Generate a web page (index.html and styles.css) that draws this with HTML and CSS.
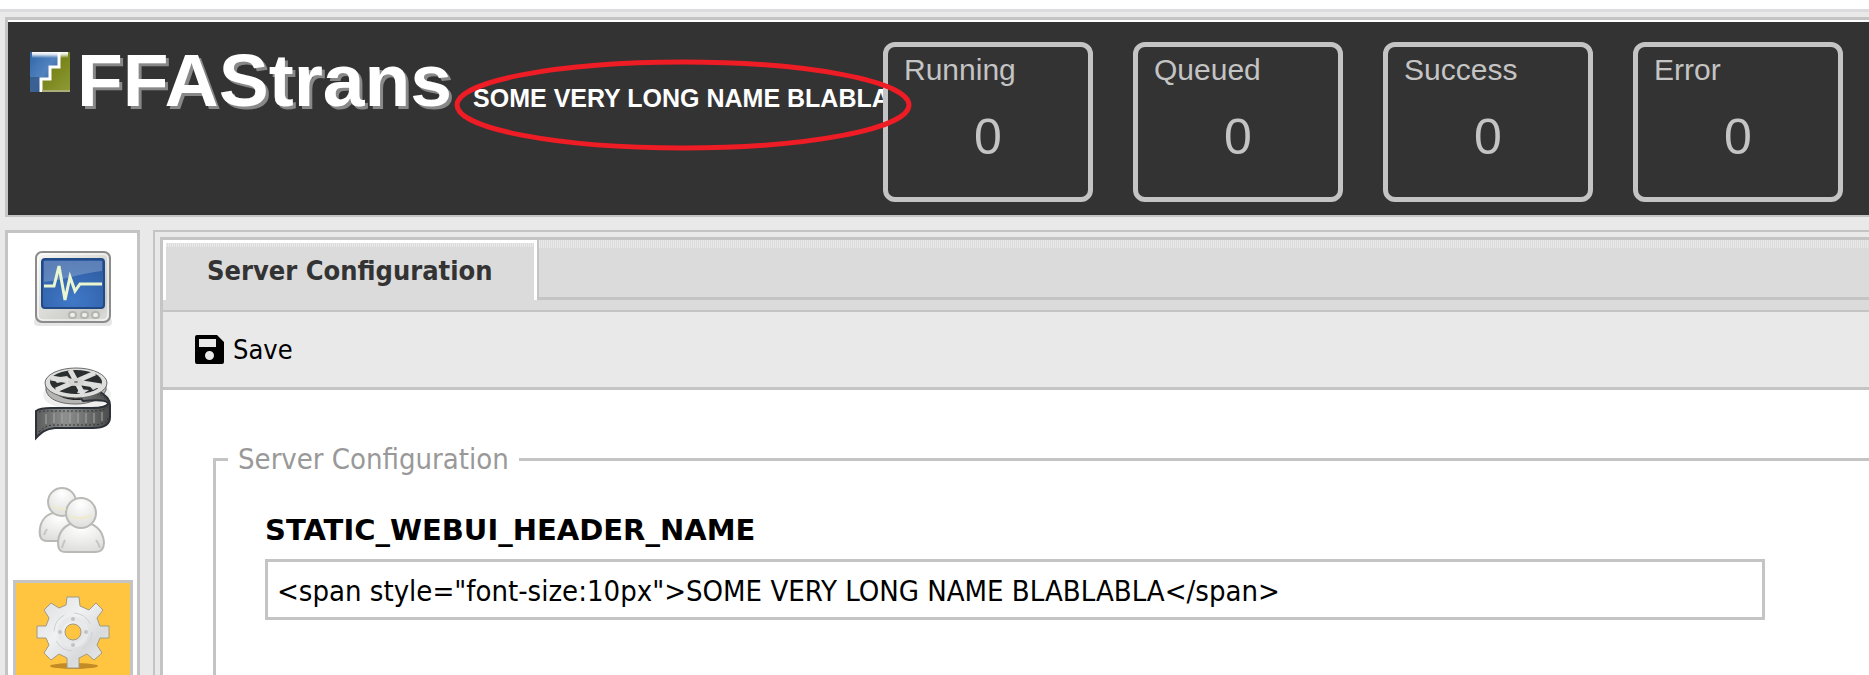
FILE: index.html
```html
<!DOCTYPE html>
<html lang="en">
<head>
    <meta charset="UTF-8">
    <meta name="viewport" content="width=device-width, initial-scale=1.0">
    <title>FFAStrans - Server Configuration</title>
    <link rel="stylesheet" href="styles.css">
</head>
<body>
    <!-- Header -->
    <header class="header">
        <svg class="logo" viewBox="0 0 40 40" aria-hidden="true">
            <defs>
                <linearGradient id="logoBlue" x1="0" y1="0" x2="1" y2="1">
                    <stop offset="0" stop-color="#2f66a8"/>
                    <stop offset="0.5" stop-color="#5283bf"/>
                    <stop offset="1" stop-color="#2d4d78"/>
                </linearGradient>
                <linearGradient id="logoGreen" x1="0" y1="0" x2="1" y2="1">
                    <stop offset="0" stop-color="#a5ad50"/>
                    <stop offset="0.5" stop-color="#78851a"/>
                    <stop offset="1" stop-color="#8f9a35"/>
                </linearGradient>
                <linearGradient id="logoShine" x1="0" y1="0" x2="0" y2="1">
                    <stop offset="0" stop-color="#ffffff"/>
                    <stop offset="0.4" stop-color="#ffffff" stop-opacity="0.8"/>
                    <stop offset="1" stop-color="#ffffff" stop-opacity="0"/>
                </linearGradient>
            </defs>
            <rect width="40" height="40" fill="url(#logoGreen)"/>
            <path d="M0 0H29V15H20V27H11V40H0z" fill="url(#logoBlue)"/>
            <path d="M0 25H11V40H0z" fill="#2d4d78" opacity="0.6"/>
            <path d="M2 0H38V6H2z" fill="url(#logoShine)"/>
            <path d="M29 0V15H20V27H11V40" fill="none" stroke="#fff" stroke-width="3"/>
            <path d="M12 39H40" stroke="#a9ae78" stroke-width="2"/>
        </svg>
        <h1 class="brand">FFAStrans</h1>
        <div class="host-name">SOME VERY LONG NAME BLABLABLA</div>
        <div class="stats">
            <section class="stat">
                <h2>Running</h2>
                <p>0</p>
            </section>
            <section class="stat">
                <h2>Queued</h2>
                <p>0</p>
            </section>
            <section class="stat">
                <h2>Success</h2>
                <p>0</p>
            </section>
            <section class="stat">
                <h2>Error</h2>
                <p>0</p>
            </section>
        </div>
        <svg class="marker" viewBox="0 0 458 92" aria-hidden="true">
            <ellipse cx="229" cy="46" rx="226" ry="43" fill="none" stroke="#ee1c24" stroke-width="5"/>
        </svg>
    </header>

    <div class="layout">
        <!-- Sidebar -->
        <nav class="sidebar">
            <a class="nav-item" href="#monitor" aria-label="Monitor">
                <svg viewBox="0 0 80 80">
                    <defs>
                        <linearGradient id="caseGrad" x1="0" y1="0" x2="1" y2="1">
                            <stop offset="0" stop-color="#f6f6f4"/>
                            <stop offset="0.8" stop-color="#c9c9c6"/>
                            <stop offset="1" stop-color="#e4e4e2"/>
                        </linearGradient>
                        <radialGradient id="screenGrad" cx="0.5" cy="0.85" r="0.8">
                            <stop offset="0" stop-color="#4079c8"/>
                            <stop offset="1" stop-color="#2f5da3"/>
                        </radialGradient>
                    </defs>
                    <rect x="1" y="70" width="78" height="8" rx="4" fill="#e6e6e6"/>
                    <rect x="3" y="4" width="74" height="70" rx="6" fill="url(#caseGrad)" stroke="#8c8c8c" stroke-width="2"/>
                    <rect x="5" y="6" width="70" height="66" rx="5" fill="none" stroke="#fff"/>
                    <rect x="9" y="11" width="62" height="49" rx="3" fill="url(#screenGrad)" stroke="#214a87" stroke-width="2"/>
                    <path d="M11 13H69V23C50 25 30 32 11 34z" fill="#fff" opacity="0.22"/>
                    <path d="M11 38H21L26 18L32 52L37 29L42 43L47 36H69" fill="none" stroke="#e9f6cf" stroke-width="3"/>
                    <g fill="#efefed" stroke="#b4b4b1" stroke-width="2">
                        <rect x="36" y="64" width="7" height="6" rx="3"/>
                        <rect x="48" y="64" width="7" height="6" rx="3"/>
                        <rect x="59" y="64" width="7" height="6" rx="3"/>
                    </g>
                </svg>
            </a>
            <a class="nav-item" href="#jobs" aria-label="Jobs">
                <svg viewBox="0 0 80 80">
                    <defs>
                        <linearGradient id="filmGrad" x1="0" y1="0" x2="1" y2="0">
                            <stop offset="0" stop-color="#5a5c5c"/>
                            <stop offset="0.4" stop-color="#8d8f8e"/>
                            <stop offset="1" stop-color="#4a4c4c"/>
                        </linearGradient>
                    </defs>
                    <ellipse cx="44" cy="32" rx="34" ry="15" fill="#eeeeee"/>
                    <path d="M13 20V27C15 37 28 41 43 41C56 41 70 36 73 27V19z" fill="#b5b5b3" stroke="#666666"/>
                    <path d="M22 30C30 37 44 39 56 35L50 30z" fill="#222222"/>
                    <path d="M45 32L65 28C73 32 77 36 77 42V54C77 61 72 65 60 65H22C12 66 9 69 3 75V48C7 45 12 45 18 45H58C68 45 75 43 75 40C72 36 60 37 50 38z" fill="url(#filmGrad)" stroke="#2d3138" stroke-width="2"/>
                    <path d="M6 49C10 48 14 48 20 48H58C68 48 74 46 75 44" fill="none" stroke="#333333" stroke-dasharray="2 2"/>
                    <path d="M6 69C12 63 16 62 22 62H58C68 62 74 60 75 55" fill="none" stroke="#333333" stroke-dasharray="2 2"/>
                    <path d="M52 34L66 31L74 37" fill="none" stroke="#333333" stroke-dasharray="2 2"/>
                    <path d="M13 51V61M21 50V60M29 50V60M37 50V60M45 50V60M53 50V60M61 50V60M69 49V58" stroke="#a8a8a8"/>
                    <ellipse cx="43" cy="20" rx="31" ry="15" fill="#dededc" stroke="#6b6b6b"/>
                    <ellipse cx="43" cy="19" rx="26" ry="12" fill="#2b2e2e"/>
                    <path d="M20 15L34 13L38 17L24 20z M46 26L56 27L50 31L44 30z M54 20L66 24L60 27z" fill="#ffffff" opacity="0.8"/>
                    <path d="M37 7L50 31M18 15L68 23M23 27L62 10" stroke="#dededc" stroke-width="5"/>
                    <ellipse cx="43" cy="19" rx="8" ry="4" fill="#d4d4d2"/>
                    <ellipse cx="43" cy="19" rx="2" ry="1" fill="#777777"/>
                </svg>
            </a>
            <a class="nav-item" href="#users" aria-label="Users">
                <svg viewBox="0 0 80 80">
                    <defs>
                        <radialGradient id="userGrad" cx="0.5" cy="0.2" r="0.8">
                            <stop offset="0" stop-color="#ffffff"/>
                            <stop offset="1" stop-color="#dededc"/>
                        </radialGradient>
                    </defs>
                    <g fill="url(#userGrad)" stroke="#b9b9b5" stroke-width="2">
                        <path d="M14 63C7 63 6 57 7 50C9 39 17 34 27 34C38 34 46 42 46 52V63z"/>
                        <circle cx="29" cy="24" r="14"/>
                        <path d="M33 74C26 74 25 70 25 64C26 51 35 44 48 44C61 44 70 52 71 64C71 70 69 74 63 74z"/>
                        <circle cx="48" cy="35" r="15"/>
                    </g>
                    <path d="M37 38Q48 43 59 37M19 28Q26 32 33 31" fill="none" stroke="#eeeacb" stroke-width="2"/>
                    <path d="M32 62Q30 66 29 70M63 62Q66 66 67 70M14 51Q12 54 11 57" fill="none" stroke="#c6c6c2" stroke-width="2"/>
                </svg>
            </a>
            <a class="nav-item active" href="#config" aria-label="Configuration">
                <svg viewBox="0 0 80 80">
                    <defs>
                        <linearGradient id="gearGrad" x1="0" y1="0" x2="1" y2="1">
                            <stop offset="0" stop-color="#dadcde"/>
                            <stop offset="0.4" stop-color="#f0f1f2"/>
                            <stop offset="0.7" stop-color="#d8dadc"/>
                            <stop offset="1" stop-color="#eeeeee"/>
                        </linearGradient>
                    </defs>
                    <ellipse cx="41" cy="73" rx="24" ry="3" fill="#a8741a" opacity="0.7"/>
                    <path fill-rule="evenodd" fill="url(#gearGrad)" stroke="#a29a80" stroke-width="1" d="M34 4H46L47 13L56 17L63 10L70 17L64 25L67 33H76V45H67L64 52L69 60L61 67L54 61L46 65V75H34V65L26 61L18 67L11 60L16 52L13 45H4V33H13L16 25L11 17L18 10L26 15L33 12zM40 31A8 8 0 1 0 40 47A8 8 0 1 0 40 31z"/>
                    <circle cx="40" cy="39" r="19" fill="none" stroke="#cfd1d4" stroke-dasharray="20 10"/>
                    <circle cx="40" cy="39" r="13" fill="none" stroke="#e8e9ea" stroke-width="5"/>
                    <g fill="#c0c2c4">
                        <circle cx="40" cy="26" r="2"/>
                        <circle cx="53" cy="39" r="2"/>
                        <circle cx="40" cy="52" r="2"/>
                        <circle cx="27" cy="39" r="2"/>
                    </g>
                </svg>
            </a>
        </nav>

        <!-- Main panel -->
        <main class="main">
            <div class="panel">
                <div class="tabbar">
                    <button type="button" class="tab">Server Configuration</button>
                    <div class="tab-rest"></div>
                </div>
                <div class="toolbar">
                    <button type="button" class="save">
                        <svg viewBox="0 0 29 29" aria-hidden="true">
                            <path fill-rule="evenodd" d="M2 0H22L29 7V27Q29 29 27 29H2Q0 29 0 27V2Q0 0 2 0zM4 4V12H21V4zM14.500 16A4.500 4.500 0 1 0 14.500 25A4.500 4.500 0 1 0 14.500 16z"/>
                        </svg>
                        <span>Save</span>
                    </button>
                </div>
                <form class="content">
                    <fieldset class="group">
                        <legend>Server Configuration</legend>
                        <label for="headerName">STATIC_WEBUI_HEADER_NAME</label>
                        <input type="text" id="headerName" name="headerName" value="&lt;span style=&quot;font-size:10px&quot;&gt;SOME VERY LONG NAME BLABLABLA&lt;/span&gt;">
                    </fieldset>
                </form>
            </div>
        </main>
    </div>
</body>
</html>
```
FILE: styles.css
```css
* {
    box-sizing: border-box;
}
body {
    font-family: "DejaVu Sans Condensed", "Noto Sans", sans-serif;
    margin: 0;
    padding: 17px 0 0 5px;
    height: 100vh;
    display: flex;
    flex-direction: column;
    gap: 13px;
    overflow: hidden;
    background: linear-gradient(#ffffff 9px, #dcdce0 9px, #dcdce0 12px, #e9e9e9 12px);
}
h1, h2, p {
    margin: 0;
}

/* Header */
.header {
    position: relative;
    display: flex;
    align-items: flex-start;
    background-color: #333333;
    border: 3px solid #c4c4c4;
    border-right: none;
    border-bottom-width: 2px;
    box-shadow: inset 0 2px 0 #ffffff;
    padding: 22px 26px 13px 22px;
    font-family: "Liberation Sans", Arial, sans-serif;
}
.logo {
    width: 40px;
    height: 40px;
    margin-top: 10px;
    flex: none;
}
.brand {
    margin-left: 7px;
    font-size: 75px;
    line-height: 76px;
    color: #ffffff;
    text-shadow: 3px 3px 0 #888888;
}
.host-name {
    flex: 1;
    min-width: 0;
    margin-left: 21px;
    padding-top: 42px;
    font-size: 25px;
    font-weight: bold;
    line-height: 28px;
    color: #ffffff;
    white-space: nowrap;
    overflow: hidden;
}
.stats {
    display: flex;
    gap: 40px;
}
.stat {
    width: 210px;
    height: 160px;
    border: 5px solid #c4c4c4;
    border-radius: 12px;
    color: #c4c4c4;
}
.stat h2 {
    padding: 6px 16px 0;
    font-size: 30px;
    font-weight: normal;
    line-height: 34px;
}
.stat p {
    margin-top: 22px;
    font-size: 50px;
    line-height: 56px;
    text-align: center;
}
.marker {
    position: absolute;
    left: 446px;
    top: 39px;
    width: 458px;
    height: 92px;
}

/* Layout */
.layout {
    flex: 1;
    min-height: 0;
    display: flex;
    gap: 13px;
}
.sidebar {
    width: 135px;
    flex: none;
    padding: 2px 4px 0 5px;
    background-color: #ffffff;
    border: 3px solid #c4c4c4;
    border-bottom: none;
    overflow: hidden;
}
.nav-item {
    display: block;
    height: 115px;
    padding: 10px 17px;
    border: 3px solid transparent;
}
.nav-item.active {
    background-color: #ffc440;
    border-color: #c4c4c4;
}
.nav-item svg {
    display: block;
    width: 80px;
    height: 80px;
}
.main {
    flex: 1;
    min-width: 0;
    display: flex;
    border: 2px solid #c4c4c4;
    border-right: none;
    border-bottom: none;
    padding: 5px 0 0 5px;
}
.panel {
    flex: 1;
    min-width: 0;
    display: flex;
    flex-direction: column;
    background-color: #ffffff;
    border: 3px solid #c4c4c4;
    border-right: none;
    border-bottom: none;
}

/* Tabs */
.tabbar {
    display: flex;
    padding-bottom: 10px;
    background-color: #dbdbdb;
    border-bottom: 2px solid #c4c4c4;
}
.tab, .tab-rest {
    background: repeating-linear-gradient(to right, #e9e9e9 0, #e9e9e9 1px, #dbdbdb 1px, #dbdbdb 2px) no-repeat #dbdbdb;
    background-size: 100% 8px;
}
.tab {
    height: 60px;
    padding: 0 41px 3px;
    border: 3px solid #ffffff;
    border-bottom: none;
    background-size: 100% 4px;
    font-family: inherit;
    font-size: 27px;
    font-weight: bold;
    color: #333333;
}
.tab-rest {
    flex: 1;
    border-left: 2px solid #c4c4c4;
    border-bottom: 3px solid #c4c4c4;
}

/* Toolbar */
.toolbar {
    display: flex;
    align-items: center;
    height: 78px;
    padding-left: 32px;
    background-color: #e9e9e9;
    border-bottom: 3px solid #c4c4c4;
}
.save {
    display: flex;
    align-items: center;
    gap: 9px;
    padding: 0;
    border: none;
    background: none;
    font-family: inherit;
    font-size: 27px;
    color: #000000;
    cursor: pointer;
}
.save svg {
    width: 29px;
    height: 29px;
}

/* Form */
.content {
    flex: 1;
    display: flex;
    padding: 51px 0 0 50px;
}
.group {
    flex: 1;
    min-width: 0;
    margin: 0;
    padding: 35px 104px 0 49px;
    border: 3px solid #c4c4c4;
    border-right: none;
    border-bottom: none;
}
.group legend {
    margin-left: -37px;
    padding: 0 10px;
    font-size: 29px;
    line-height: 36px;
    color: #999999;
}
.group label {
    display: block;
    margin-bottom: 11px;
    font-family: "DejaVu Sans", sans-serif;
    font-size: 29px;
    font-weight: bold;
    line-height: 36px;
}
.group input {
    width: 100%;
    height: 61px;
    padding: 3px 9px 0;
    border: 3px solid #c4c4c4;
    background-color: #ffffff;
    font-family: inherit;
    font-size: 29px;
    color: #000000;
}
```
